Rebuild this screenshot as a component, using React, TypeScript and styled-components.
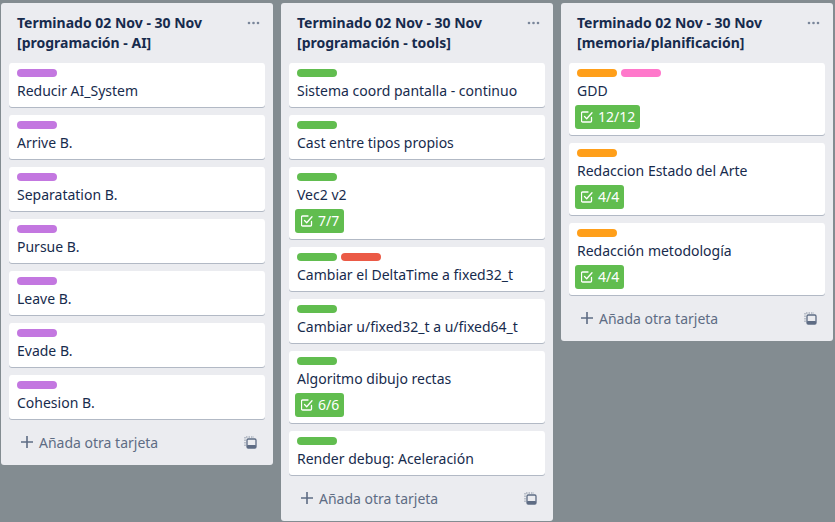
import React from "react";
import styled, { createGlobalStyle } from "styled-components";

const GlobalStyle = createGlobalStyle`
  html, body {
    margin: 0;
    padding: 0;
    background: #838c91;
    font-family: "Noto Sans", "Open Sans", sans-serif;
    font-size: 14px;
    color: #172b4d;
  }
  * { box-sizing: border-box; }
`;

type LabelColor = "purple" | "green" | "red" | "orange" | "pink";

const labelColors: Record<LabelColor, string> = {
  purple: "#c377e0",
  green: "#61bd4f",
  red: "#eb5a46",
  orange: "#ff9f1a",
  pink: "#ff78cb",
};

interface CardData {
  labels: LabelColor[];
  title: string;
  checklist?: string;
}

interface ListData {
  title: string[];
  cards: CardData[];
}

const lists: ListData[] = [
  {
    title: ["Terminado 02 Nov - 30 Nov", "[programación - AI]"],
    cards: [
      { labels: ["purple"], title: "Reducir AI_System" },
      { labels: ["purple"], title: "Arrive B." },
      { labels: ["purple"], title: "Separatation B." },
      { labels: ["purple"], title: "Pursue B." },
      { labels: ["purple"], title: "Leave B." },
      { labels: ["purple"], title: "Evade B." },
      { labels: ["purple"], title: "Cohesion B." },
    ],
  },
  {
    title: ["Terminado 02 Nov - 30 Nov", "[programación - tools]"],
    cards: [
      { labels: ["green"], title: "Sistema coord pantalla - continuo" },
      { labels: ["green"], title: "Cast entre tipos propios" },
      { labels: ["green"], title: "Vec2 v2", checklist: "7/7" },
      { labels: ["green", "red"], title: "Cambiar el DeltaTime a fixed32_t" },
      { labels: ["green"], title: "Cambiar u/fixed32_t a u/fixed64_t" },
      { labels: ["green"], title: "Algoritmo dibujo rectas", checklist: "6/6" },
      { labels: ["green"], title: "Render debug: Aceleración" },
    ],
  },
  {
    title: ["Terminado 02 Nov - 30 Nov", "[memoria/planificación]"],
    cards: [
      { labels: ["orange", "pink"], title: "GDD", checklist: "12/12" },
      { labels: ["orange"], title: "Redaccion Estado del Arte", checklist: "4/4" },
      { labels: ["orange"], title: "Redacción metodología", checklist: "4/4" },
    ],
  },
];

const Board = styled.div`
  display: flex;
  align-items: flex-start;
  gap: 8px;
  padding: 3px 0 0 1px;
`;

const List = styled.div`
  width: 272px;
  flex: 0 0 272px;
  background: #ebecf0;
  border-radius: 3px;
  display: flex;
  flex-direction: column;
`;

const ListHeader = styled.div`
  display: flex;
  align-items: flex-start;
  justify-content: space-between;
  padding: 10px 13px 10px 16px;
`;

const ListTitle = styled.h2`
  margin: 0;
  font-size: 14px;
  font-weight: 700;
  line-height: 20px;
  color: #172b4d;
`;

const MenuButton = styled.span`
  display: flex;
  width: 14px;
  height: 20px;
  align-items: center;
  justify-content: center;
  color: #7a869a;
`;

const Cards = styled.div`
  display: flex;
  flex-direction: column;
  gap: 8px;
  padding: 0 8px;
`;

const Card = styled.div`
  background: #fff;
  border-radius: 3px;
  box-shadow: 0 1px 0 rgba(9, 30, 66, 0.25);
  padding: 6px 8px 2px;
`;

const Labels = styled.div`
  display: flex;
  gap: 4px;
  margin-bottom: 4px;
`;

const Label = styled.span<{ $color: LabelColor }>`
  display: block;
  width: 40px;
  height: 8px;
  border-radius: 4px;
  background: ${(p) => labelColors[p.$color]};
`;

const CardTitle = styled.div`
  line-height: 20px;
  margin-bottom: 4px;
  color: #172b4d;
`;

const Badges = styled.div`
  display: flex;
  margin: 0 0 4px -2px;
`;

const CompleteBadge = styled.span`
  display: inline-flex;
  align-items: center;
  gap: 5px;
  height: 24px;
  padding: 0 5px 0 6px;
  border-radius: 3px;
  background: #61bd4f;
  color: #fff;
  font-size: 14px;
  line-height: 20px;
`;

const Footer = styled.div`
  display: flex;
  align-items: center;
  justify-content: space-between;
  padding: 9px 16px 9px 20px;
`;

const AddCard = styled.div`
  display: flex;
  align-items: center;
  gap: 6px;
  height: 28px;
  color: #5e6c84;
  font-size: 14px;
`;

const TemplateButton = styled.span`
  display: flex;
  color: #5e6c84;
`;

const DotsIcon = () => (
  <svg width="13" height="6" viewBox="0 0 13 6">
    <circle cx="2" cy="3" r="1.3" fill="currentColor" />
    <circle cx="6.5" cy="3" r="1.3" fill="currentColor" />
    <circle cx="11" cy="3" r="1.3" fill="currentColor" />
  </svg>
);

const CheckIcon = () => (
  <svg width="12" height="12" viewBox="0 0 12 12" fill="none" stroke="currentColor" strokeWidth="1.3" strokeLinecap="round" strokeLinejoin="round">
    <path d="M10.5 6.5v3.5a1 1 0 0 1-1 1h-8a1 1 0 0 1-1-1v-8a1 1 0 0 1 1-1H7" />
    <path d="M3.5 5.5l2.2 2.2L11 1.8" />
  </svg>
);

const PlusIcon = () => (
  <svg width="12" height="12" viewBox="0 0 12 12" stroke="currentColor" strokeWidth="1.6">
    <path d="M6 0v12M0 6h12" />
  </svg>
);

const TemplateIcon = () => (
  <svg width="13" height="13" viewBox="0 0 13 13" fill="none">
    <path d="M1 10V1h9" stroke="currentColor" strokeWidth="1" strokeDasharray="1.5 1" opacity="0.7" />
    <rect x="3" y="3" width="9" height="9" rx="1.2" stroke="currentColor" strokeWidth="1.3" />
    <rect x="3" y="9" width="9" height="3" rx="0.8" fill="currentColor" />
  </svg>
);

export default function App() {
  return (
    <>
      <GlobalStyle />
      <Board>
        {lists.map((list, i) => (
          <List key={i}>
            <ListHeader>
              <ListTitle>
                {list.title[0]}
                <br />
                {list.title[1]}
              </ListTitle>
              <MenuButton>
                <DotsIcon />
              </MenuButton>
            </ListHeader>
            <Cards>
              {list.cards.map((card, j) => (
                <Card key={j}>
                  <Labels>
                    {card.labels.map((l, k) => (
                      <Label key={k} $color={l} />
                    ))}
                  </Labels>
                  <CardTitle>{card.title}</CardTitle>
                  {card.checklist && (
                    <Badges>
                      <CompleteBadge>
                        <CheckIcon />
                        {card.checklist}
                      </CompleteBadge>
                    </Badges>
                  )}
                </Card>
              ))}
            </Cards>
            <Footer>
              <AddCard>
                <PlusIcon />
                Añada otra tarjeta
              </AddCard>
              <TemplateButton>
                <TemplateIcon />
              </TemplateButton>
            </Footer>
          </List>
        ))}
      </Board>
    </>
  );
}
